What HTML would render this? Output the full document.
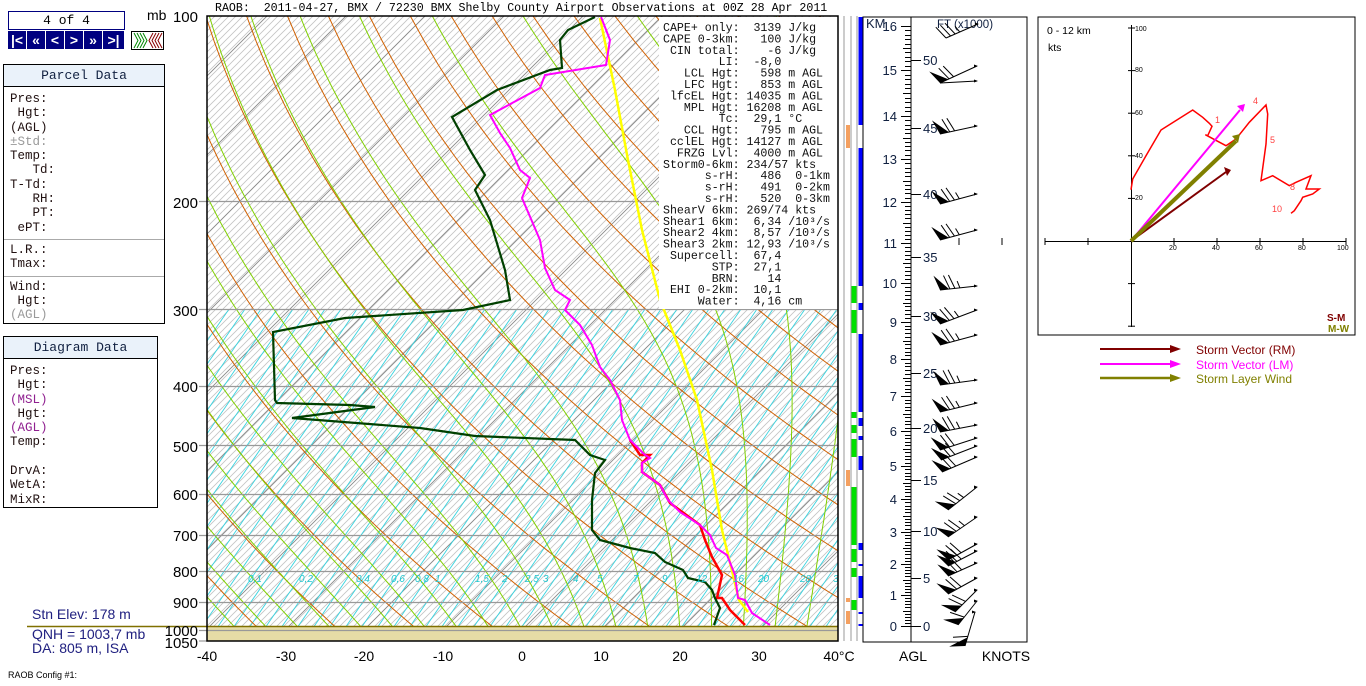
<!DOCTYPE html>
<html><head><meta charset="utf-8">
<style>
body{margin:0;width:1366px;height:686px;background:#fff;position:relative;overflow:hidden;font-family:"Liberation Sans",sans-serif}
.mono{font-family:"Liberation Mono",monospace}
.abs{position:absolute}
.box{position:absolute;border:1px solid #000;background:#fff}
.hdr{background:#eaf2fa;border-bottom:1px solid #000;text-align:center;font-family:"Liberation Mono",monospace;font-size:13px;color:#102040;line-height:21px}
.lbl{font-family:"Liberation Mono",monospace;font-size:12.5px;color:#201010;line-height:14.3px;padding:5px 0 0 6px;white-space:pre}
.nav{position:absolute;top:31px;height:18px;width:18px;background:#000080;color:#fff;font-weight:bold;font-size:14px;text-align:center;line-height:18px;border-right:1px solid #fff}
</style></head><body>
<div class="box mono" style="left:8px;top:11px;width:115px;height:17px;border-color:#000080;text-align:center;font-size:13px;line-height:17px">4 of 4</div>
<div class="nav" style="left:8px">|&lt;</div><div class="nav" style="left:27px">«</div><div class="nav" style="left:46px">&lt;</div><div class="nav" style="left:65px">&gt;</div><div class="nav" style="left:84px">»</div><div class="nav" style="left:103px;width:21px;border:none">&gt;|</div>
<div class="abs" style="left:147px;top:7px;font-size:14px">mb</div>
<svg class="abs" style="left:131px;top:31px" width="33" height="19"><rect x="0.5" y="0.5" width="32" height="18" fill="#fff" stroke="#000"/><path d="M3 2 L7 9.5 L3 17 M6 2 L10 9.5 L6 17 M9 2 L13 9.5 L9 17 M12 2 L16 9.5 L12 17" stroke="#080" fill="none"/><path d="M22 2 L18 9.5 L22 17 M25 2 L21 9.5 L25 17 M28 2 L24 9.5 L28 17 M31 2 L27 9.5 L31 17" stroke="#800" fill="none"/></svg>
<div class="box" style="left:3px;top:64px;width:160px;height:258px">
<div class="hdr">Parcel Data</div>
<div class="lbl">Pres:
 Hgt:
(AGL)
<span style="color:#999">±Std:</span>
Temp:
   Td:
T-Td:
   RH:
   PT:
 ePT:</div>
<div style="border-top:1px solid #aaa;margin-top:4px"></div>
<div class="lbl" style="padding-top:3px">L.R.:
Tmax:</div>
<div style="border-top:1px solid #aaa;margin-top:4px"></div>
<div class="lbl" style="padding-top:3px">Wind:
 Hgt:
<span style="color:#999">(AGL)</span></div>
</div>
<div class="box" style="left:3px;top:336px;width:153px;height:170px">
<div class="hdr">Diagram Data</div>
<div class="lbl">Pres:
 Hgt:
<span style="color:#902090">(MSL)</span>
 Hgt:
<span style="color:#902090">(AGL)</span>
Temp:

DrvA:
WetA:
MixR:</div>
</div>
<div class="abs" style="left:32px;top:606px;font-size:14px;color:#202080">Stn Elev: 178 m</div>
<div class="abs" style="left:32px;top:627px;font-size:14px;color:#202080;line-height:14px">QNH = 1003,7 mb<br>DA: 805 m, ISA</div>
<div class="abs" style="left:8px;top:670px;font-size:9px;color:#000">RAOB Config #1:</div>
<div class="abs mono" style="left:215px;top:2px;font-size:11.6px;white-space:pre">RAOB:  2011-04-27, BMX / 72230 BMX Shelby County Airport Observations at 00Z 28 Apr 2011</div>

<svg id="s" class="abs" style="left:0;top:0" width="1366" height="686" xmlns="http://www.w3.org/2000/svg">
<defs>
<pattern id="h" width="7" height="7" patternUnits="userSpaceOnUse"><path d="M-1 8 L8 -1 M-1 1 L1 -1 M6 8 L8 6" stroke="#c4c4c4" stroke-width="0.8"/></pattern>
<clipPath id="pc"><rect x="207" y="16" width="631" height="625"/></clipPath>
<clipPath id="mc"><rect x="207" y="310" width="631" height="317"/></clipPath>
</defs>
<rect x="207" y="16" width="631" height="625" fill="url(#h)"/>
<g id="lines" clip-path="url(#pc)" fill="none"></g>
<rect x="207" y="627" width="631" height="14" fill="#e6dca6"/>
<line x1="27" y1="626.5" x2="838" y2="626.5" stroke="#807000" stroke-width="1.5"/>
<g id="iso" stroke="#999" stroke-width="1.2"></g>
<g id="prof" fill="none" clip-path="url(#pc)"></g>
<rect x="659" y="17" width="179" height="292" fill="#fff"/>
<text class="mono" font-family="Liberation Mono,monospace" font-size="11.6" fill="#101010" xml:space="preserve">
<tspan x="663" y="31">CAPE+ only:  3139 J/kg</tspan>
<tspan x="663" y="42.4">CAPE 0-3km:   100 J/kg</tspan>
<tspan x="663" y="53.8"> CIN total:    -6 J/kg</tspan>
<tspan x="663" y="65.2">        LI:  -8,0</tspan>
<tspan x="663" y="76.6">   LCL Hgt:   598 m AGL</tspan>
<tspan x="663" y="88">   LFC Hgt:   853 m AGL</tspan>
<tspan x="663" y="99.4"> lfcEL Hgt: 14035 m AGL</tspan>
<tspan x="663" y="110.8">   MPL Hgt: 16208 m AGL</tspan>
<tspan x="663" y="122.2">        Tc:  29,1 °C</tspan>
<tspan x="663" y="133.6">   CCL Hgt:   795 m AGL</tspan>
<tspan x="663" y="145"> cclEL Hgt: 14127 m AGL</tspan>
<tspan x="663" y="156.4">  FRZG Lvl:  4000 m AGL</tspan>
<tspan x="663" y="167.8">Storm0-6km: 234/57 kts</tspan>
<tspan x="663" y="179.2">      s-rH:   486  0-1km</tspan>
<tspan x="663" y="190.6">      s-rH:   491  0-2km</tspan>
<tspan x="663" y="202">      s-rH:   520  0-3km</tspan>
<tspan x="663" y="213.4">ShearV 6km: 269/74 kts</tspan>
<tspan x="663" y="224.8">Shear1 6km:  6,34 /10³/s</tspan>
<tspan x="663" y="236.2">Shear2 4km:  8,57 /10³/s</tspan>
<tspan x="663" y="247.6">Shear3 2km: 12,93 /10³/s</tspan>
<tspan x="663" y="259"> Supercell:  67,4</tspan>
<tspan x="663" y="270.4">       STP:  27,1</tspan>
<tspan x="663" y="281.8">       BRN:    14</tspan>
<tspan x="663" y="293.2"> EHI 0-2km:  10,1</tspan>
<tspan x="663" y="304.6">     Water:  4,16 cm</tspan>
</text>
<g font-size="10" font-style="italic" fill="#20c8d0">
<text x="248" y="582">0,1</text><text x="299" y="582">0,2</text><text x="356" y="582">0,4</text><text x="391" y="582">0,6</text><text x="415" y="582">0,8</text><text x="435" y="582">1</text><text x="475" y="582">1,5</text><text x="502" y="582">2</text><text x="525" y="582">2,5</text><text x="543" y="582">3</text><text x="573" y="582">4</text><text x="597" y="582">5</text><text x="633" y="582">7</text><text x="662" y="582">9</text><text x="696" y="582">12</text><text x="733" y="582">16</text><text x="758" y="582">20</text><text x="800" y="582">28</text><text x="833" y="582">3</text>
</g>
<rect x="207" y="16" width="631" height="625" fill="none" stroke="#000" stroke-width="1.5"/>
<g font-size="15" fill="#000" text-anchor="end">
<text x="198" y="22">100</text><text x="198" y="208">200</text><text x="198" y="316">300</text><text x="198" y="392">400</text><text x="198" y="452">500</text><text x="198" y="500">600</text><text x="198" y="541">700</text><text x="198" y="577">800</text><text x="198" y="608">900</text><text x="198" y="636">1000</text><text x="198" y="648">1050</text>
</g>
<g font-size="14" fill="#000" text-anchor="middle">
<text x="207" y="661">-40</text><text x="286" y="661">-30</text><text x="364" y="661">-20</text><text x="443" y="661">-10</text><text x="522" y="661">0</text><text x="601" y="661">10</text><text x="680" y="661">20</text><text x="759" y="661">30</text><text x="839" y="661">40°C</text>
<text x="913" y="661">AGL</text><text x="1006" y="661">KNOTS</text>
</g>
<g stroke="#999" stroke-width="1"><line x1="844" y1="16" x2="844" y2="641"/><line x1="851" y1="16" x2="851" y2="641"/><line x1="857" y1="16" x2="857" y2="641"/></g>
<g id="cols"></g>
<rect x="863" y="17" width="164" height="625" fill="none" stroke="#000" stroke-width="1"/>
<line x1="911" y1="17" x2="911" y2="642" stroke="#000"/>
<g id="km" stroke="#000"></g>
<g font-size="13" fill="#102040">
<text x="866" y="28">KM</text><text x="937" y="28" font-size="11.5">FT (x1000)</text>
</g>
<g id="kml" font-size="13" fill="#102040" text-anchor="end"></g>
<g id="barbs"></g>
<rect x="1038" y="17" width="317" height="318" fill="#fff" stroke="#000"/>
<text x="1047" y="34" font-size="10.5">0 - 12 km</text><text x="1048" y="51" font-size="10.5">kts</text>
<g id="hodo" stroke="#000" fill="none"></g>
<g font-size="7" fill="#000"><text x="1135" y="31">100</text><text x="1135" y="72">80</text><text x="1135" y="115">60</text><text x="1135" y="158">40</text><text x="1135" y="200">20</text>
<text x="1169" y="250">20</text><text x="1212" y="250">40</text><text x="1255" y="250">60</text><text x="1298" y="250">80</text><text x="1337" y="250">100</text></g>
<text x="1327" y="321" font-size="10" font-weight="bold" fill="#800000">S-M</text>
<text x="1328" y="332" font-size="10" font-weight="bold" fill="#808000">M-W</text>
<g stroke-width="2"><line x1="1100" y1="349" x2="1172" y2="349" stroke="#800000"/><line x1="1100" y1="364" x2="1172" y2="364" stroke="#ff00ff"/><line x1="1100" y1="378" x2="1172" y2="378" stroke="#808000" stroke-width="2.5"/></g>
<path d="M1170 345 L1181 349 L1170 353Z" fill="#800000"/><path d="M1170 360 L1181 364 L1170 368Z" fill="#ff00ff"/><path d="M1170 374 L1181 378 L1170 382Z" fill="#808000"/>
<g font-size="12"><text x="1196" y="354" fill="#800000">Storm Vector (RM)</text><text x="1196" y="369" fill="#ff00ff">Storm Vector (LM)</text><text x="1196" y="383" fill="#808000">Storm Layer Wind</text></g>
</svg>
<script>
(function(){
var NS="http://www.w3.org/2000/svg";
function el(p,t,a){var e=document.createElementNS(NS,t);for(var k in a)e.setAttribute(k,a[k]);p.appendChild(e);return e;}
function yP(p){return 16+266.7*Math.log(p/100);}
function xT(T,p){return 522+7.9*T+(630-yP(p));}
var L=document.getElementById('lines');
function poly(g,pts,st,w,extra){var d=pts.map(function(q,i){return (i?'L':'M')+q[0].toFixed(1)+' '+q[1].toFixed(1)}).join(' ');var a={d:d,stroke:st,'stroke-width':w,fill:'none'};if(extra)for(var k in extra)a[k]=extra[k];return el(g,'path',a);}
for(var T=-130;T<=40;T+=10){poly(L,[[xT(T,1050),yP(1050)],[xT(T,100),yP(100)]],'#8a8a8a',0.9);}
var mg=el(L,'g',{'clip-path':'url(#mc)'});
for(var x=0;x<=850;x+=16){poly(mg,[[x,641],[x+0.69*331,310]],'#38d4e0',0.9);}
for(var th=220;th<=520;th+=10){var pts=[];for(var p=1050;p>=100;p-=10){var T=th*Math.pow(p/1000,0.2857)-273.15;pts.push([xT(T,p),yP(p)]);}poly(L,pts,'#d06000',1);}
function step(T,p,dp){var es=6.112*Math.exp(17.67*(T-273.15)/(T-29.65));var rs=0.622*es/(p-es);var g=(287*T+2.5e6*rs)/(p*(1004+2.5e6*2.5e6*rs*0.622/(287*T*T)));return T+g*dp;}
for(var T0=-36;T0<=44;T0+=4){var pts=[];var T=T0+273.15;
 var Tl=step(T,1000,50);pts.push([xT(Tl-273.15,1050),yP(1050)]);
 for(var p=1000;p>=100;p-=5){pts.push([xT(T-273.15,p),yP(p)]);T=step(T,p,-5);}
 poly(L,pts,'#80d000',1);}
var I=document.getElementById('iso');
[200,300,400,500,600,700,800,900,1000].forEach(function(p){var y=Math.round(yP(p))+0.5;el(I,'line',{x1:199,y1:y,x2:838,y2:y});});
el(I,'line',{x1:199,y1:641,x2:207,y2:641});
var P=document.getElementById('prof');
var yel=[[600,18],[615,90],[628,160],[642,230],[660,300],[680,350],[697,400],[712,470],[722,530],[733,575],[739,600],[748,612]];
var mag=[[601,17],[603,22],[610,40],[606,65],[545,75],[540,88],[490,115],[500,133],[510,148],[520,170],[530,178],[522,198],[528,212],[540,240],[545,268],[555,290],[570,300],[565,310],[580,325],[592,345],[600,367],[610,380],[620,400],[622,420],[630,440],[645,455],[650,458],[642,463],[642,472],[660,485],[668,500],[680,512],[700,525],[710,535],[716,548],[727,555],[735,575],[738,598],[745,600],[752,613],[770,625]];
var red=[[630,440],[640,455],[650,455],[642,463],[642,472],[660,485],[670,503],[700,525],[705,540],[712,557],[722,575],[717,598],[722,598],[730,610],[745,625]];
var dew=[[595,17],[568,30],[560,40],[562,68],[550,70],[497,90],[452,117],[470,150],[485,175],[475,190],[490,220],[505,270],[510,300],[463,310],[345,318],[273,332],[275,400],[277,403],[350,405],[375,407],[292,418],[420,428],[475,436],[575,440],[590,455],[605,460],[595,473],[592,500],[592,530],[600,540],[630,548],[655,553],[665,562],[683,570],[688,578],[705,582],[712,590],[715,598],[720,608],[714,625]];
poly(P,yel,'#ffff00',2.5);poly(P,red,'#ff0000',2.5);poly(P,mag,'#ff00ff',2);poly(P,dew,'#004000',2.2);
var C=document.getElementById('cols');
function bar(x,w,a,b,c){el(C,'rect',{x:x,y:a,width:w,height:b-a,fill:c});}
[[17,125],[148,286],[303,310],[334,412],[418,426],[436,440],[456,470],[543,550],[564,566],[576,598],[612,614],[624,626]].forEach(function(s){bar(858.5,5,s[0],s[1],'#0000ff');});
[[286,303],[310,333],[412,418],[425,433],[439,457],[487,545],[549,562],[568,577],[600,610]].forEach(function(s){bar(851.5,5,s[0],s[1],'#00e000');});
[[125,148],[470,486],[598,602],[611,624]].forEach(function(s){bar(846,4,s[0],s[1],'#f4a060');});
var K=document.getElementById('km'),KL=document.getElementById('kml');
var km=[626,595,564,532,499,466,431,396,359,322,283,243,202,159,116,70,26];
for(var i=0;i<16;i++){for(var j=0;j<10;j++){var y=km[i]+(km[i+1]-km[i])*j/10;y=Math.round(y)+0.5;el(K,'line',{x1:j==0||j==5?(j==0?901:903):905,y1:y,x2:911,y2:y,'stroke-width':1});}}
el(K,'line',{x1:901,y1:26.5,x2:911,y2:26.5});
for(i=0;i<=16;i++){var t=el(KL,'text',{x:897,y:km[i]+5});t.textContent=i;}
var ft=[[0,626],[5,578],[10,531],[15,480],[20,428],[25,373],[30,316],[35,257],[40,194],[45,128],[50,60]];
ft.forEach(function(f){el(K,'line',{x1:911,y1:f[1]+0.5,x2:921,y2:f[1]+0.5});var t=el(KL,'text',{x:923,y:f[1]+5,'text-anchor':'start'});t.textContent=f[0];});
var B=document.getElementById('barbs');
function barb(bx,by,tx,ty,np,nb){el(B,'line',{x1:bx,y1:by,x2:tx,y2:ty,stroke:'#000','stroke-width':1});
 var dx=tx-bx,dy=ty-by,l=Math.sqrt(dx*dx+dy*dy),ux=dx/l,uy=dy/l,nx=uy,ny=-ux;var o=0;
 for(var i=0;i<np;i++){var a=[bx+ux*o,by+uy*o],b=[bx+ux*(o+9),by+uy*(o+9)],c=[bx+ux*o+nx*15-ux*5,by+uy*o+ny*15-uy*5];
  el(B,'path',{d:'M'+a+' L'+b+' L'+c+'Z',fill:'#000'});o+=10;}
 for(i=0;i<nb;i++){var s=[bx+ux*o,by+uy*o];var e=[s[0]+nx*14-ux*5,s[1]+ny*14-uy*5];if(i==nb-1&&nb>2){e=[s[0]+nx*7-ux*2,s[1]+ny*7-uy*2];}
  el(B,'line',{x1:s[0],y1:s[1],x2:e[0],y2:e[1],stroke:'#000','stroke-width':1});o+=5;}
 el(B,'path',{d:'M'+(tx-3)+' '+(ty-1.5)+' L'+(tx+1)+' '+ty+' L'+(tx-3)+' '+(ty+1.5)+'Z',fill:'#000'});}
var bl=[[946,38,978,24,0,4],[940,83,977,66,1,2],[940,83,977,81,0,0],[940,134,977,126,1,2],[940,204,977,194,1,3],[940,240,977,230,1,3],[940,290,977,286,1,3],[940,324,977,310,1,3],[940,345,977,335,1,3],[940,385,977,380,1,3],[940,412,977,403,1,3],[940,432,977,425,1,3],[940,450,977,438,1,2],[941,460,977,446,1,2],[942,472,977,457,1,2],[948,510,977,487,1,3],[948,537,977,517,1,3],[948,560,977,544,1,2],[948,566,977,551,1,2],[948,576,977,563,1,2],[948,594,977,578,1,2],[955,612,977,590,1,2],[958,625,977,601,1,1],[965,646,975,612,1,1]];
bl.forEach(function(b){barb.apply(null,b);});
var H=document.getElementById('hodo');
var ox=1131,oy=241;
el(H,'line',{x1:1045,y1:241.5,x2:1346,y2:241.5});el(H,'line',{x1:1131.5,y1:25,x2:1131.5,y2:327});
for(var k=-80;k<=100;k+=20){if(k==0)continue;var x=ox+k*2.15;el(H,'line',{x1:x,y1:238,x2:x,y2:245});}
for(k=-40;k<=100;k+=20){if(k==0)continue;var y=oy-k*2.13;el(H,'line',{x1:1128,y1:y,x2:1135,y2:y});}
var hz=[[285,527],[290,495],[330,425],[375,348],[470,288],[500,310],[520,328],[528,337],[515,365],[508,362],[570,395],[600,375],[640,325],[690,273],[695,300],[690,390],[675,500],[710,485],[760,515],[780,505],[825,485],[810,525],[850,525],[830,540],[800,550],[795,560],[775,590],[765,598]];
poly(H,hz.map(function(q){return [1036+q[0]/3,14+q[1]/3];}),'#ff0000',1.5);
poly(H,[[ox,oy],[1226,172]],'#800000',2);el(H,'path',{d:'M1224 167 L1231 170 L1227 176Z',fill:'#800000',stroke:'none'});
poly(H,[[ox,oy],[1240,110]],'#ff00ff',2);el(H,'path',{d:'M1237 106 L1245 104 L1243 112Z',fill:'#ff00ff',stroke:'none'});
poly(H,[[ox,oy],[1236,141]],'#808000',4);el(H,'path',{d:'M1232 136 L1240 134 L1238 143Z',fill:'#808000',stroke:'none'});
var hl=[[1215,123,'1'],[1270,143,'5'],[1290,190,'8'],[1272,212,'10'],[1253,104,'4']];
hl.forEach(function(h){var t=el(H,'text',{x:h[0],y:h[1],fill:'#ff4040',stroke:'none','font-size':9});t.textContent=h[2];});
})();
</script>
</body></html>
